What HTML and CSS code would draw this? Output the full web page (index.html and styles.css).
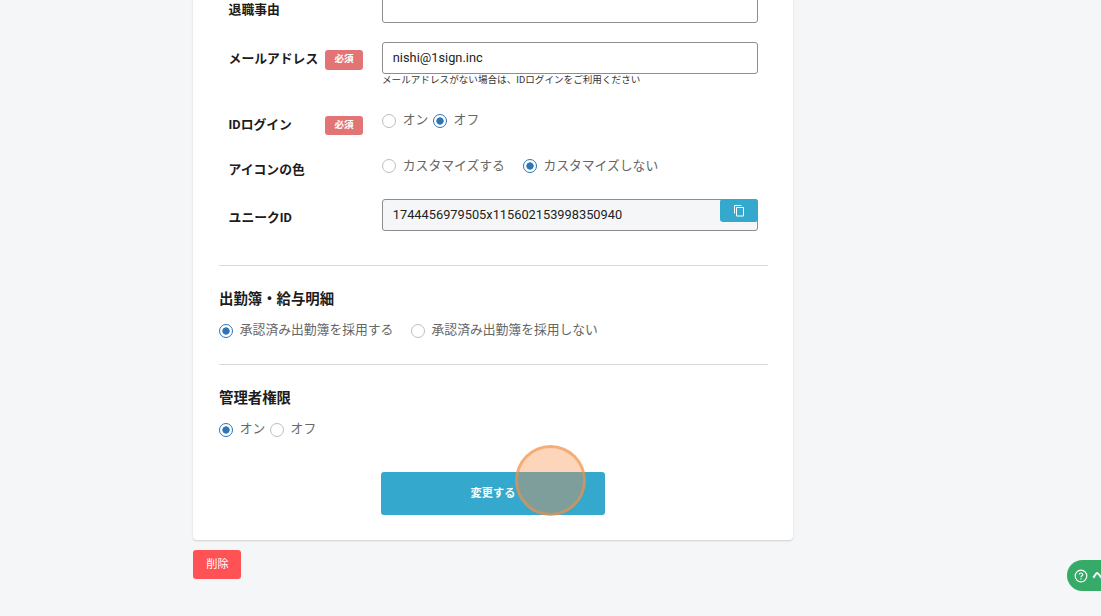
FILE: index.html
```
<!DOCTYPE html>
<html lang="ja">
<head>
  <meta charset="UTF-8" />
  <meta name="viewport" content="width=device-width, initial-scale=1.0"/>
  <title>従業員情報の編集</title>
  <link rel="stylesheet" href="styles.css">
</head>
<body>
  <main class="page">
    <form class="card">
      <div class="row row-first">
        <label class="row-label" for="reason">退職事由</label>
        <div class="field"><input id="reason" class="text-input" type="text"></div>
      </div>
      <div class="row row-mail">
        <label class="row-label" for="mail">メールアドレス</label>
        <span class="badge">必須</span>
        <div class="field">
          <input id="mail" class="text-input" type="text" value="nishi@1sign.inc">
          <p class="hint">メールアドレスがない場合は、IDログインをご利用ください</p>
        </div>
      </div>
      <div class="row row-radio">
        <span class="row-label">IDログイン</span>
        <span class="badge">必須</span>
        <div class="field radios">
          <label class="radio"><input type="radio" name="login"><span>オン</span></label>
          <label class="radio"><input type="radio" name="login" checked><span>オフ</span></label>
        </div>
      </div>
      <div class="row row-radio row-color">
        <span class="row-label">アイコンの色</span>
        <div class="field radios radios-wide">
          <label class="radio"><input type="radio" name="color"><span>カスタマイズする</span></label>
          <label class="radio"><input type="radio" name="color" checked><span>カスタマイズしない</span></label>
        </div>
      </div>
      <div class="row row-id">
        <label class="row-label" for="uid">ユニークID</label>
        <div class="field">
          <input id="uid" class="text-input" type="text" value="1744456979505x115602153998350940" readonly>
          <button type="button" class="copy-btn" aria-label="コピー">
            <svg width="12" height="13" viewBox="0 0 12 13" fill="none" stroke="#fff">
              <path d="M1.5 9.5v-8h7"/>
              <path d="M3.5 3.5h7v8.5h-7z"/>
            </svg>
          </button>
        </div>
      </div>

      <section class="section">
        <h2>出勤簿・給与明細</h2>
        <div class="radios radios-wide">
          <label class="radio"><input type="radio" name="book" checked><span>承認済み出勤簿を採用する</span></label>
          <label class="radio"><input type="radio" name="book"><span>承認済み出勤簿を採用しない</span></label>
        </div>
      </section>
      <section class="section">
        <h2>管理者権限</h2>
        <div class="radios">
          <label class="radio"><input type="radio" name="admin" checked><span>オン</span></label>
          <label class="radio"><input type="radio" name="admin"><span>オフ</span></label>
        </div>
      </section>

      <button type="button" class="submit-btn">変更する</button>
    </form>
    <button type="button" class="delete-btn">削除</button>
  </main>

  <!-- click marker -->
  <div class="pointer"></div>

  <button type="button" class="help-btn">
    <svg width="14" height="14" viewBox="0 0 14 14" fill="none" stroke="#fff" stroke-width="1.2">
      <circle cx="7" cy="7" r="5.8"/>
      <path d="M5.3 5.6c0-2.2 3.5-2.1 3.5 0 0 1.2-1.8 1.2-1.8 2.6M7 9.3v1.3"/>
    </svg>
    <span>ヘ</span>
  </button>
</body>
</html>
```

FILE: styles.css
```
* {
  box-sizing: border-box;
}

body {
  margin: 0;
  height: 100vh;
  overflow: hidden;
  background: #f4f6f8;
  color: #1c1c1c;
  font-family: Roboto, 'Noto Sans CJK JP', sans-serif;
  font-size: 12.8px;
}

button {
  border: 0;
  padding: 0;
  color: #fff;
  font-family: inherit;
  cursor: pointer;
}

.page {
  width: 600px;
  margin-top: -9px;
  margin-left: 193px;
}

.card {
  height: 549px;
  padding: 0 25px 0 26px;
  background: #fff;
  border-radius: 0 0 4px 4px;
  box-shadow: 0 1px 2px rgba(0, 0, 0, 0.16);
}

.row {
  display: flex;
  align-items: flex-start;
  height: 46px;
  padding-left: 9.6px;
}

.row-first {
  height: 51px;
}

.row-mail {
  height: 63px;
}

.row-color {
  height: 48px;
}

.row-id {
  height: 66px;
}

.row-label {
  width: 96.4px;
  padding-top: 3px;
  line-height: 32px;
  font-weight: bold;
  white-space: nowrap;
}

.row-mail .row-label {
  padding-top: 1px;
}

.row-radio .row-label {
  padding-top: 4px;
}

.row-color .row-label {
  padding-top: 3px;
}

.badge {
  width: 38px;
  height: 20px;
  margin-top: 8px;
  border-radius: 3px;
  background: #e27476;
  color: #fff;
  font-size: 9.6px;
  font-weight: bold;
  line-height: 18px;
  text-align: center;
}

.row-radio .badge {
  height: 19px;
  margin-top: 11px;
}

.field {
  position: relative;
  width: 376px;
  margin-left: auto;
  margin-right: 10px;
}

.text-input {
  display: block;
  width: 100%;
  height: 32px;
  padding: 0 10px 2px 9.8px;
  border: 1px solid #8c8c91;
  border-radius: 3px;
  background: #fff;
  color: #222;
  font-family: inherit;
  font-size: 12.8px;
  outline: none;
}

.text-input[readonly] {
  background: #f4f6f8;
}

.hint {
  margin: 0;
  font-size: 9.6px;
  line-height: 12px;
  color: #333;
}

.radios {
  display: flex;
  gap: 4.4px;
  height: 32px;
}

.radios-wide {
  gap: 17.4px;
}

.row-color .radios-wide {
  gap: 17.8px;
}

.radio {
  display: flex;
  align-items: center;
  height: 30px;
  color: #666;
  white-space: nowrap;
}

.radio input {
  appearance: none;
  width: 14px;
  height: 14px;
  margin: 2px 6.8px 0 0;
  border: 1px solid #bdbdbd;
  border-radius: 50%;
  background: #fff;
}

.row-color .radio input {
  margin-top: 0;
}

.radio span {
  padding-bottom: 3px;
}

.radio input:checked {
  border-color: #2f74b3;
  background: radial-gradient(circle, #2f74b3 3.3px, #fff 4px);
}

/* sits over the right end of the ID input */
.copy-btn {
  position: absolute;
  top: 0;
  right: 0;
  display: flex;
  align-items: center;
  justify-content: center;
  width: 38px;
  height: 23px;
  border-radius: 3px;
  background: #35a9cd;
}

.section {
  height: 99px;
  padding-top: 23px;
  border-top: 1px solid #d9d9d9;
}

.section h2 {
  margin: 0;
  font-size: 14.4px;
  line-height: 22px;
}

.section .radios {
  margin-top: 4px;
}

.submit-btn {
  display: block;
  width: 224px;
  height: 43px;
  margin: 9px 0 0 162px;
  padding-bottom: 3px;
  border-radius: 3px;
  background: #35a9cd;
  font-size: 11.2px;
  font-weight: bold;
}

.delete-btn {
  display: block;
  width: 48px;
  height: 29px;
  margin-top: 10px;
  padding: 0 0 3px 1px;
  border-radius: 3px;
  background: #ff5254;
  font-size: 11.2px;
}

.pointer {
  position: absolute;
  left: 515px;
  top: 445px;
  width: 71px;
  height: 71px;
  border: 3px solid rgba(240, 145, 70, 0.6);
  border-radius: 50%;
  background: rgba(249, 142, 67, 0.37);
}

/* help tab runs off the right edge of the window */
.help-btn {
  position: fixed;
  left: 1067px;
  top: 560px;
  display: flex;
  align-items: center;
  gap: 4px;
  width: 92px;
  height: 31px;
  padding-left: 7px;
  border-radius: 16px;
  background: #36aa67;
  font-size: 12px;
  font-weight: bold;
}
```
